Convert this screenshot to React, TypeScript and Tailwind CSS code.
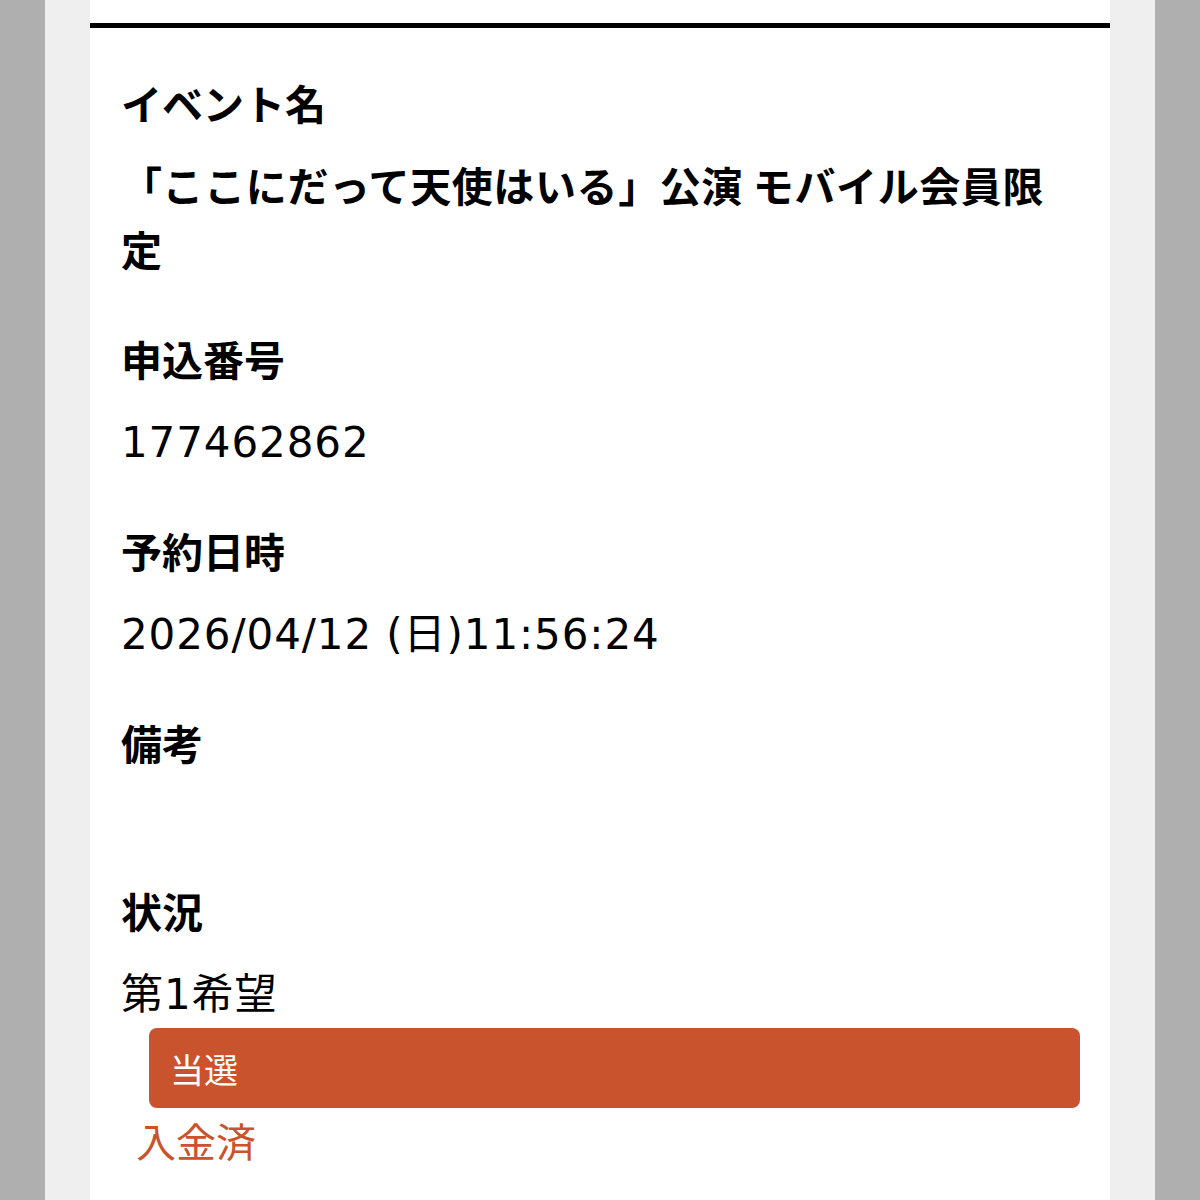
const label = "font-['Noto_Sans_CJK_JP',sans-serif] font-bold text-[41px] leading-[64px] text-black";
const value =
  "mt-[21px] font-['DejaVu_Sans','Noto_Sans_CJK_JP',sans-serif] text-[42px] leading-[64px] tracking-[0.9px] text-black";

function Item({ title, children }: { title: string; children?: React.ReactNode }) {
  return (
    <div className="pb-[43px]">
      <div className={label}>{title}</div>
      {children}
    </div>
  );
}

export default function App() {
  return (
    <div className="flex h-[1200px] w-full overflow-hidden bg-[#afafaf]">
      <div className="w-[45px] shrink-0 bg-[#afafaf]" />
      <div className="w-[45px] shrink-0 bg-[#efefef]" />
      <main className="w-[1020px] shrink-0 bg-white pt-[23px]">
        <div className="h-[5px] bg-black" />
        <div className="pl-[31px] pr-[42px] pt-[42px]">
          <Item title="イベント名">
            <div className="mt-[18px] pb-[3px] font-['Noto_Sans_CJK_JP',sans-serif] font-bold text-[41px] leading-[64px] tracking-[0.6px] text-black">
              「ここにだって天使はいる」公演 モバイル会員限定
            </div>
          </Item>
          <Item title="申込番号">
            <div className={value}>177462862</div>
          </Item>
          <Item title="予約日時">
            <div className={value}>2026/04/12 (日)11:56:24</div>
          </Item>
          <Item title="備考">
            <div className="mt-[18px] h-[43px]" />
          </Item>
          <div>
            <div className={label}>状況</div>
            <div className={value}>第1希望</div>
            <div className="mt-[1px] ml-[28px] flex h-[80px] w-[931px] items-center rounded-[8px] bg-[#c9532c] pl-[21px] font-['Noto_Sans_CJK_JP',sans-serif] text-[34px] text-white">
              当選
            </div>
            <div className="ml-[15px] font-['Noto_Sans_CJK_JP',sans-serif] text-[40px] leading-[64px] text-[#c9532c]">
              入金済
            </div>
          </div>
        </div>
      </main>
      <div className="w-[45px] shrink-0 bg-[#efefef]" />
      <div className="flex-1 bg-[#afafaf]" />
    </div>
  );
}
